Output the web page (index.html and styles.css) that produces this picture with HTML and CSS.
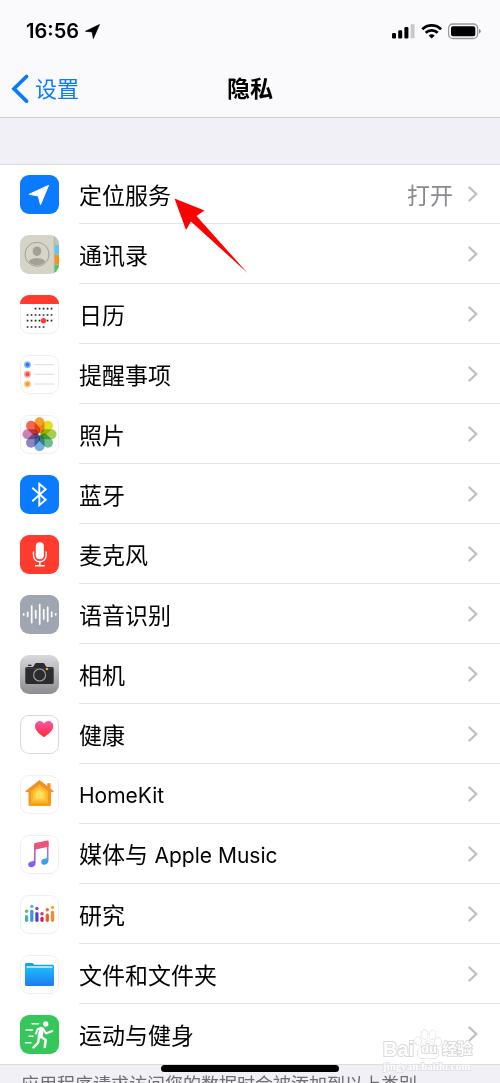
FILE: index.html
```html
<!DOCTYPE html>
<html lang="zh-CN">
<head>
<meta charset="utf-8">
<meta name="viewport" content="width=device-width, initial-scale=1">
<title>隐私</title>
<link rel="stylesheet" href="styles.css">
</head>
<body>
<svg class="defs" width="0" height="0" aria-hidden="true">
  <defs>
    <linearGradient id="g-cam" x1="0" y1="0" x2="0" y2="1"><stop offset="0" stop-color="#d9d8dc"/><stop offset="1" stop-color="#8d8c91"/></linearGradient>
    <linearGradient id="g-heart" x1="0" y1="0" x2="0" y2="1"><stop offset="0" stop-color="#fc55a8"/><stop offset="1" stop-color="#fb2a30"/></linearGradient>
    <linearGradient id="g-house" x1="0" y1="0" x2="0" y2="1"><stop offset="0" stop-color="#f5892a"/><stop offset="1" stop-color="#fb9c15"/></linearGradient>
    <linearGradient id="g-note" gradientUnits="userSpaceOnUse" x1="20" y1="5" x2="20" y2="32"><stop offset="0" stop-color="#fb4f6b"/><stop offset=".3" stop-color="#ea5384"/><stop offset=".65" stop-color="#a061e4"/><stop offset="1" stop-color="#7a5cfb"/></linearGradient>
    <linearGradient id="g-note2" gradientUnits="userSpaceOnUse" x1="20" y1="8" x2="20" y2="28"><stop offset="0" stop-color="#f4527a"/><stop offset=".5" stop-color="#9a7ee0"/><stop offset="1" stop-color="#2ba4f4"/></linearGradient>
    <linearGradient id="g-folder" x1="0" y1="0" x2="0" y2="1"><stop offset="0" stop-color="#1fb8fb"/><stop offset="1" stop-color="#1c7cf2"/></linearGradient>
    <clipPath id="c-icon"><rect width="39" height="39" rx="9"/></clipPath>
    <clipPath id="c-face"><circle cx="17" cy="19.3" r="11"/></clipPath>
    <symbol id="chevron" viewBox="0 0 10 16"><path d="M1.500 1.500 8.300 8l-6.800 6.500" fill="none" stroke="#c1c1c4" stroke-width="2.400" stroke-linecap="round"/></symbol>
  </defs>
</svg>

<div class="screen">
  <header class="top">
    <div class="status">
      <div class="status-left">
        <time class="clock">16:56</time>
        <svg width="15" height="15" viewBox="0 0 14 14" aria-hidden="true"><path d="M.5 6.800 13.500.5 7.800 13.500 6.700 7.400z" stroke="#000" stroke-width=".7" stroke-linejoin="round"/></svg>
      </div>
      <svg class="status-right" width="90" height="17" viewBox="0 0 90 17" aria-hidden="true">
        <rect x="1" y="10" width="4" height="5.500" rx="1.300"/>
        <rect x="7.200" y="7.300" width="4" height="8.200" rx="1.300"/>
        <rect x="13.400" y="4" width="4" height="11.500" rx="1.300"/>
        <rect x="19.600" y="1" width="4" height="14.500" rx="1.300" fill="#c9c9cb"/>
        <g fill="none" stroke="#000" stroke-width="2.700">
          <path d="M31.300 6.300a13.300 13.300 0 0 1 18.800 0"/>
          <path d="M34.700 9.800a8.500 8.500 0 0 1 12 0"/>
        </g>
        <path d="M37.700 12.600a4.300 4.300 0 0 1 6 0l-3 3z"/>
        <rect x="57.600" y="1" width="29" height="14.500" rx="4.300" fill="none" stroke="#98989a" stroke-width="1.300"/>
        <rect x="60" y="3.300" width="24.300" height="10" rx="2"/>
        <path d="M88 6v4.600q1.700-.6 1.700-2.300T88 6z" fill="#8a8a8c"/>
      </svg>
    </div>
    <nav class="nav">
      <a class="back" href="#settings">
        <svg width="18" height="30" viewBox="0 0 18 30" aria-hidden="true"><path d="M15.500 2.500 3 14.800 15.500 27.100" fill="none" stroke="#0a7aff" stroke-width="3.700" stroke-linecap="round"/></svg>
        <span>设置</span>
      </a>
      <h1 class="title">隐私</h1>
    </nav>
  </header>

  <main class="content">
    <ul class="list">
      <li><a class="row" href="#location">
        <svg class="icon" viewBox="0 0 39 39" aria-hidden="true"><rect width="39" height="39" rx="9" fill="#0a7aff"/><path d="M9.200 19.300 28.500 10.400 20.500 29.700 18.300 21z" fill="#fff" stroke="#fff" stroke-linejoin="round"/></svg>
        <span class="cell"><span class="name">定位服务</span><span class="value">打开</span><svg class="chev" aria-hidden="true"><use href="#chevron"/></svg></span></a></li>
      <li><a class="row" href="#contacts">
        <svg class="icon" viewBox="0 0 39 39" aria-hidden="true"><g clip-path="url(#c-icon)"><rect width="39" height="39" fill="#d6d3c8"/><path d="M34 0h5v9h-5z" fill="#c4c3bd"/><path d="M34.500 10H39v9.500h-4.500z" fill="#5fc4f8"/><path d="M34.500 20H39v9.500h-4.500z" fill="#fb9112"/><path d="M34.500 30H39v9h-4.500z" fill="#46cb5b"/><path d="M34.200 0v39M34 9.700h5M34 19.700h5M34 29.700h5" stroke="#b1aea5" stroke-width=".7"/></g><circle cx="17" cy="19.300" r="12" fill="none" stroke="#a49f98" stroke-width="1"/><g fill="#a49f98" clip-path="url(#c-face)"><ellipse cx="17" cy="16.200" rx="4.300" ry="4.800"/><ellipse cx="17" cy="28.500" rx="9" ry="5.500"/></g></svg>
        <span class="cell"><span class="name">通讯录</span><svg class="chev" aria-hidden="true"><use href="#chevron"/></svg></span></a></li>
      <li><a class="row" href="#calendar">
        <svg class="icon" viewBox="0 0 39 39" aria-hidden="true"><rect class="tile" x=".5" y=".5" width="38" height="38" rx="8.500"/><path d="M0 9a9 9 0 0 1 9-9h21a9 9 0 0 1 9 9z" fill="#ff3b30"/><g fill="none" stroke="#222" stroke-width="1.700" stroke-dasharray="1.700 2.300"><path d="M14.700 13.700H33"/><path d="M6.700 20H33"/><path d="M6.700 25.700H33"/><path d="M6.700 32H25"/></g><circle cx="23.500" cy="25.700" r="2.600" fill="#ff3b30"/></svg>
        <span class="cell"><span class="name">日历</span><svg class="chev" aria-hidden="true"><use href="#chevron"/></svg></span></a></li>
      <li><a class="row" href="#reminders">
        <svg class="icon" viewBox="0 0 39 39" aria-hidden="true"><rect class="tile" x=".5" y=".5" width="38" height="38" rx="8.500"/><path d="M14.500 9.700H34M14.500 19.300H34M14.500 29H34" stroke="#dcdcde"/><g stroke-width="1.500"><circle cx="7.500" cy="9.700" r="2.700" fill="#1d7df5" stroke="#8dbdfa"/><circle cx="7.500" cy="19.300" r="2.700" fill="#fb453d" stroke="#fda09c"/><circle cx="7.500" cy="29" r="2.700" fill="#fc971c" stroke="#fdcb8c"/></g></svg>
        <span class="cell"><span class="name">提醒事项</span><svg class="chev" aria-hidden="true"><use href="#chevron"/></svg></span></a></li>
      <li><a class="row" href="#photos">
        <svg class="icon" viewBox="0 0 39 39" aria-hidden="true"><rect class="tile" x=".5" y=".5" width="38" height="38" rx="8.500"/><g class="petals" transform="translate(19.500 19.300)"><rect x="-5" y="-17" width="10" height="16" rx="5" fill="#f9a02c"/><rect x="-5" y="-17" width="10" height="16" rx="5" fill="#e6dd20" transform="rotate(45)"/><rect x="-5" y="-17" width="10" height="16" rx="5" fill="#a5cd54" transform="rotate(90)"/><rect x="-5" y="-17" width="10" height="16" rx="5" fill="#6cbe90" transform="rotate(135)"/><rect x="-5" y="-17" width="10" height="16" rx="5" fill="#76aede" transform="rotate(180)"/><rect x="-5" y="-17" width="10" height="16" rx="5" fill="#8c86c0" transform="rotate(225)"/><rect x="-5" y="-17" width="10" height="16" rx="5" fill="#c584b4" transform="rotate(270)"/><rect x="-5" y="-17" width="10" height="16" rx="5" fill="#f0685a" transform="rotate(315)"/></g></svg>
        <span class="cell"><span class="name">照片</span><svg class="chev" aria-hidden="true"><use href="#chevron"/></svg></span></a></li>
      <li><a class="row" href="#bluetooth">
        <svg class="icon" viewBox="0 0 39 39" aria-hidden="true"><rect width="39" height="39" rx="9" fill="#0a7aff"/><path d="M12.300 12.800 25.700 24.800 19.300 30.200V8.800l6.400 5.400L12.300 26.200" fill="none" stroke="#fff" stroke-width="1.900"/></svg>
        <span class="cell"><span class="name">蓝牙</span><svg class="chev" aria-hidden="true"><use href="#chevron"/></svg></span></a></li>
      <li><a class="row" href="#microphone">
        <svg class="icon" viewBox="0 0 39 39" aria-hidden="true"><rect width="39" height="39" rx="9" fill="#ff3b30"/><rect x="15.800" y="7.300" width="8" height="17" rx="4" fill="#fff"/><path d="M13.500 16.500v4a6.300 6.300 0 0 0 12.600 0v-4M19.800 27v3.700M15 30.800h9.700" fill="none" stroke="#fff" stroke-width="1.400"/></svg>
        <span class="cell"><span class="name">麦克风</span><svg class="chev" aria-hidden="true"><use href="#chevron"/></svg></span></a></li>
      <li><a class="row" href="#speech">
        <svg class="icon" viewBox="0 0 39 39" aria-hidden="true"><rect width="39" height="39" rx="9" fill="#a0a6b1"/><path d="M3.700 18.800v1M7.700 17.300v4M11.700 11v16.600M15.700 15.700v7.200M19.700 9.500v19.600M23.700 14.700v9.200M27.700 12.300v14M31.700 17.200v4.200M35.700 18.800v1" stroke="#fff" stroke-width="1.700" stroke-linecap="round"/></svg>
        <span class="cell"><span class="name">语音识别</span><svg class="chev" aria-hidden="true"><use href="#chevron"/></svg></span></a></li>
      <li><a class="row" href="#camera">
        <svg class="icon" viewBox="0 0 39 39" aria-hidden="true"><rect width="39" height="39" rx="9" fill="url(#g-cam)"/><path d="M6.800 12H12.500q.8 0 1.200-.8L15 8.800q.4-.8 1.300-.8h6.900q.9 0 1.300.8l1.300 2.400q.4.800 1.200.8h5.200q1.500 0 1.500 1.500v13.800q0 1.700-1.500 1.700H6.800q-1.500 0-1.500-1.700V13.500Q5.300 12 6.800 12z" fill="#2c2b2d"/><path d="M8 11V9.700h3.400V11z" fill="#2c2b2d"/><path d="M5.300 13.600h28.400" stroke="#49484b" stroke-width=".8"/><circle cx="19.600" cy="20" r="6" fill="#2c2b2d" stroke="#a2a1a5" stroke-width="1.100"/><circle cx="27" cy="14" r="1.200" fill="#f8b500"/></svg>
        <span class="cell"><span class="name">相机</span><svg class="chev" aria-hidden="true"><use href="#chevron"/></svg></span></a></li>
      <li><a class="row" href="#health">
        <svg class="icon" viewBox="0 0 39 39" aria-hidden="true"><rect class="tile tile-dark" x=".5" y=".5" width="38" height="38" rx="8.500"/><path d="M24 22.200C20.500 19.700 15 15.800 15 11.200 15 8.300 17.200 6 19.800 6c1.900 0 3.400 1 4.200 2.600C24.900 7 26.500 6 28.400 6c2.700 0 4.900 2.300 4.900 5.200 0 4.600-5.800 8.500-9.300 11z" fill="url(#g-heart)"/></svg>
        <span class="cell"><span class="name">健康</span><svg class="chev" aria-hidden="true"><use href="#chevron"/></svg></span></a></li>
      <li><a class="row" href="#homekit">
        <svg class="icon" viewBox="0 0 39 39" aria-hidden="true"><rect class="tile" x=".5" y=".5" width="38" height="38" rx="8.500"/><path d="M19.500 5 27.300 11V8.300h3.200v5.300l3 2.300q.7.900-.5 1.100h-2v12.500q0 1.500-1.500 1.500H10q-1.500 0-1.500-1.500V17H6q-1.200-.2-.5-1.100z" fill="url(#g-house)"/><path d="M19.500 9.500 28 16v12.200H11V16z" fill="#fdb42b"/><path d="M19.500 12.200 25.700 17v8.700H13.300V17z" fill="#fdca3f"/><path d="M19.500 15 23.400 18v5.700h-7.800V18z" fill="#fee05c"/></svg>
        <span class="cell"><span class="name"><span class="latin">HomeKit</span></span><svg class="chev" aria-hidden="true"><use href="#chevron"/></svg></span></a></li>
      <li><a class="row" href="#media">
        <svg class="icon" viewBox="0 0 39 39" aria-hidden="true"><rect class="tile" x=".5" y=".5" width="38" height="38" rx="8.500"/><path d="M28.500 6.300v19c0 2.400-1.700 4.100-4 4.400-2 .2-3.300-.9-3.300-2.700 0-1.900 1.300-2.900 3.300-3.200 1.600-.3 2.400-.5 2.400-1.700V10z" fill="url(#g-note2)"/><path d="M14 9.500q0-1.200 1.200-1.500L27.400 5.500q1.100-.2 1.100.8v5.500L15.600 14.500V28c0 2.400-1.700 4-4 4.300-2 .2-3.400-.9-3.400-2.700 0-1.900 1.400-2.900 3.400-3.200 1.600-.3 2.400-.5 2.400-1.700z" fill="url(#g-note)"/></svg>
        <span class="cell"><span class="name">媒体与 <span class="latin">Apple Music</span></span><svg class="chev" aria-hidden="true"><use href="#chevron"/></svg></span></a></li>
      <li><a class="row" href="#research">
        <svg class="icon" viewBox="0 0 39 39" aria-hidden="true"><rect class="tile" x=".5" y=".5" width="38" height="38" rx="8.500"/><g stroke-width="3.200" stroke-linecap="round"><path d="M6.600 21.500v3.800" stroke="#3eb3a8"/><path d="M11.800 16.300v9" stroke="#3293f1"/><path d="M16.900 18.600v6.700" stroke="#5a3bd0"/><path d="M22 23.300v2" stroke="#d0204d"/><path d="M27.300 20v5.300" stroke="#f0582d"/><path d="M32.500 17.300v8" stroke="#f58a2a"/></g><circle cx="6.600" cy="16.300" r="1.700" fill="#58c46b"/><circle cx="11.800" cy="11.400" r="1.700" fill="#3dbdf2"/><circle cx="16.900" cy="13.500" r="1.700" fill="#8745d4"/><circle cx="22" cy="18.700" r="1.700" fill="#e03050"/><circle cx="27.300" cy="14.800" r="1.700" fill="#f46a32"/><circle cx="32.500" cy="12.400" r="1.700" fill="#fba62b"/></svg>
        <span class="cell"><span class="name">研究</span><svg class="chev" aria-hidden="true"><use href="#chevron"/></svg></span></a></li>
      <li><a class="row" href="#files">
        <svg class="icon" viewBox="0 0 39 39" aria-hidden="true"><rect class="tile" x=".5" y=".5" width="38" height="38" rx="8.500"/><path d="M5 9.500Q5 8 6.500 8H12q.8 0 1.400.7l1 1.100H32.500Q34 9.800 34 11.300V14H5z" fill="#16a5e6"/><rect x="6.500" y="11.200" width="26" height="4" fill="#d8f1fc"/><path d="M5 12.800H34V29.500Q34 31 32.500 31h-26Q5 31 5 29.500z" fill="url(#g-folder)"/></svg>
        <span class="cell"><span class="name">文件和文件夹</span><svg class="chev" aria-hidden="true"><use href="#chevron"/></svg></span></a></li>
      <li><a class="row" href="#fitness">
        <svg class="icon" viewBox="0 0 39 39" aria-hidden="true"><rect width="39" height="39" rx="9" fill="#35c759"/><circle cx="25.700" cy="9" r="2.700" fill="#fff"/><g fill="none" stroke="#fff" stroke-linecap="round" stroke-linejoin="round"><path d="M21.800 14.500 20 21" stroke-width="4.800"/><path d="M21.500 12.800 17.600 14.200 16 18.500M23.500 14.500l2.600 4 6.200-2.500" stroke-width="2"/><path d="M20.800 21.500 25.700 25 24.800 32M19 22.500 18 27.800 13.500 32.300" stroke-width="2.500"/><path d="M12 8.800h6.500M6 15h6.500M9 21.200h4M5.500 27.800h5.500" stroke-width="1.400"/></g></svg>
        <span class="cell"><span class="name">运动与健身</span><svg class="chev" aria-hidden="true"><use href="#chevron"/></svg></span></a></li>
    </ul>
    <p class="note">应用程序请求访问您的数据时会被添加到以上类别</p>
  </main>

  <svg class="pointer" viewBox="0 0 74 76" aria-hidden="true"><path d="M.5.500 30.500 12.500 22.500 18 73.500 75 17 23.500 12 32z" fill="#fe0000"/></svg>

  <div class="mark">
    <div class="brand">
      <span>Bai</span>
      <span class="paw">
        <svg viewBox="0 0 28 30" aria-hidden="true"><g fill="#fff" stroke="#d0d0d3"><ellipse cx="4" cy="12" rx="3" ry="4" transform="rotate(-15 4 12)"/><ellipse cx="10.500" cy="5.500" rx="3.200" ry="4.500"/><ellipse cx="18.500" cy="5.800" rx="3.200" ry="4.500" transform="rotate(10 18.500 5.800)"/><ellipse cx="24" cy="13" rx="3.200" ry="4" transform="rotate(10 24 13)"/><path d="M14 12c3.500 0 5 3 7 5.500 2.500 2.500 4 4.500 3.500 7.500-.5 3.500-3 4.500-5.500 4.300-2-.2-3-.6-5-.6s-3 .4-5 .6c-2.500.2-5-.8-5.500-4.300-.5-3 1-5 3.500-7.500C9 15 10.500 12 14 12z"/></g></svg>
        <span class="du">du</span>
      </span>
      <span class="jy">经验</span>
    </div>
    <div class="domain">jingyan.baidu.com</div>
  </div>
  <div class="home"></div>
</div>
</body>
</html>
```
FILE: styles.css
```css
* {
  box-sizing: border-box;
}

body {
  margin: 0;
  font-family: Inter, "Noto Sans CJK SC", sans-serif;
  font-size: 23px;
  color: #000;
  background: #f1f0f6;
}

.defs {
  position: absolute;
}

.screen {
  position: relative;
  display: flex;
  flex-direction: column;
  height: 100vh;
  overflow: hidden;
}

.top {
  flex: none;
  background: #fafafc;
  border-bottom: 1px solid #cfced3;
}

.status {
  display: flex;
  justify-content: space-between;
  align-items: center;
  height: 60px;
  padding: 2px 19px 0 26px;
}

.status-left {
  display: flex;
  align-items: center;
  gap: 6px;
}

.clock {
  font-size: 20px;
  font-weight: 600;
}

.nav {
  display: grid;
  grid-template-columns: 1fr auto 1fr;
  align-items: center;
  height: 57px;
  padding: 0 11px;
}

.back {
  display: flex;
  align-items: center;
  gap: 6px;
  color: #0a7aff;
  text-decoration: none;
  font-size: 22px;
  line-height: 32px;
}

.title {
  margin: 0;
  font-size: 23px;
  font-weight: 600;
  line-height: 32px;
}

.content {
  flex: 1;
  min-height: 0;
  padding-top: 46px;
  overflow-y: auto;
  scrollbar-width: none;
}

.list {
  margin: 0;
  padding: 0;
  list-style: none;
  background: #fff;
  box-shadow: inset 0 1px #dcdbe0;
}

.row {
  display: flex;
  align-items: center;
  gap: 20px;
  height: 60px;
  padding-left: 20px;
  color: inherit;
  text-decoration: none;
  line-height: 32px;
}

.icon {
  flex: none;
  width: 39px;
  height: 39px;
}

.tile {
  fill: #fff;
  stroke: #f0f0f1;
}

.tile-dark {
  stroke: #d9d9db;
}

.petals rect {
  mix-blend-mode: multiply;
}

.cell {
  flex: 1;
  display: flex;
  align-items: center;
  gap: 15px;
  height: 60px;
  padding-right: 22px;
  border-bottom: 1px solid #e3e3e5;
}

.list li:last-child .cell {
  border-bottom-color: transparent;
}

.name,
.value {
  padding-top: 4px;
}

.name {
  flex: 1;
}

.latin {
  font-size: 21px;
}

.value {
  color: #8a8a8e;
}

.chev {
  width: 10px;
  height: 16px;
}

.note {
  margin: 0;
  padding: 7px 21px;
  border-top: 1px solid #dcdbe0;
  font-size: 18px;
  line-height: 26px;
  color: #6d6d72;
  white-space: nowrap;
}

.pointer {
  position: absolute;
  left: 174px;
  top: 198px;
  width: 74px;
  height: 76px;
}

.home {
  position: absolute;
  left: 50%;
  bottom: 11px;
  width: 178px;
  height: 7px;
  margin-left: -89px;
  border-radius: 4px;
  background: #000;
}

.mark {
  position: absolute;
  right: 28px;
  bottom: 10px;
  width: 89px;
  color: #fff;
  -webkit-text-stroke: 2px #dadadd;
  paint-order: stroke fill;
  white-space: nowrap;
}

.brand {
  display: flex;
  align-items: flex-end;
  font-family: "Liberation Sans", "Noto Sans CJK SC", sans-serif;
  font-size: 20px;
  font-weight: 700;
  line-height: 20px;
}

.paw {
  position: relative;
  width: 28px;
  height: 30px;
}

.paw svg {
  display: block;
  width: 28px;
  height: 30px;
}

.du {
  position: absolute;
  left: 7px;
  bottom: 0;
  font-size: 13px;
}

.jy {
  font-size: 15px;
}

.domain {
  font-family: "Liberation Serif", serif;
  font-size: 11px;
  font-weight: 700;
  line-height: 14px;
  -webkit-text-stroke-color: #e2e2e6;
}
```
